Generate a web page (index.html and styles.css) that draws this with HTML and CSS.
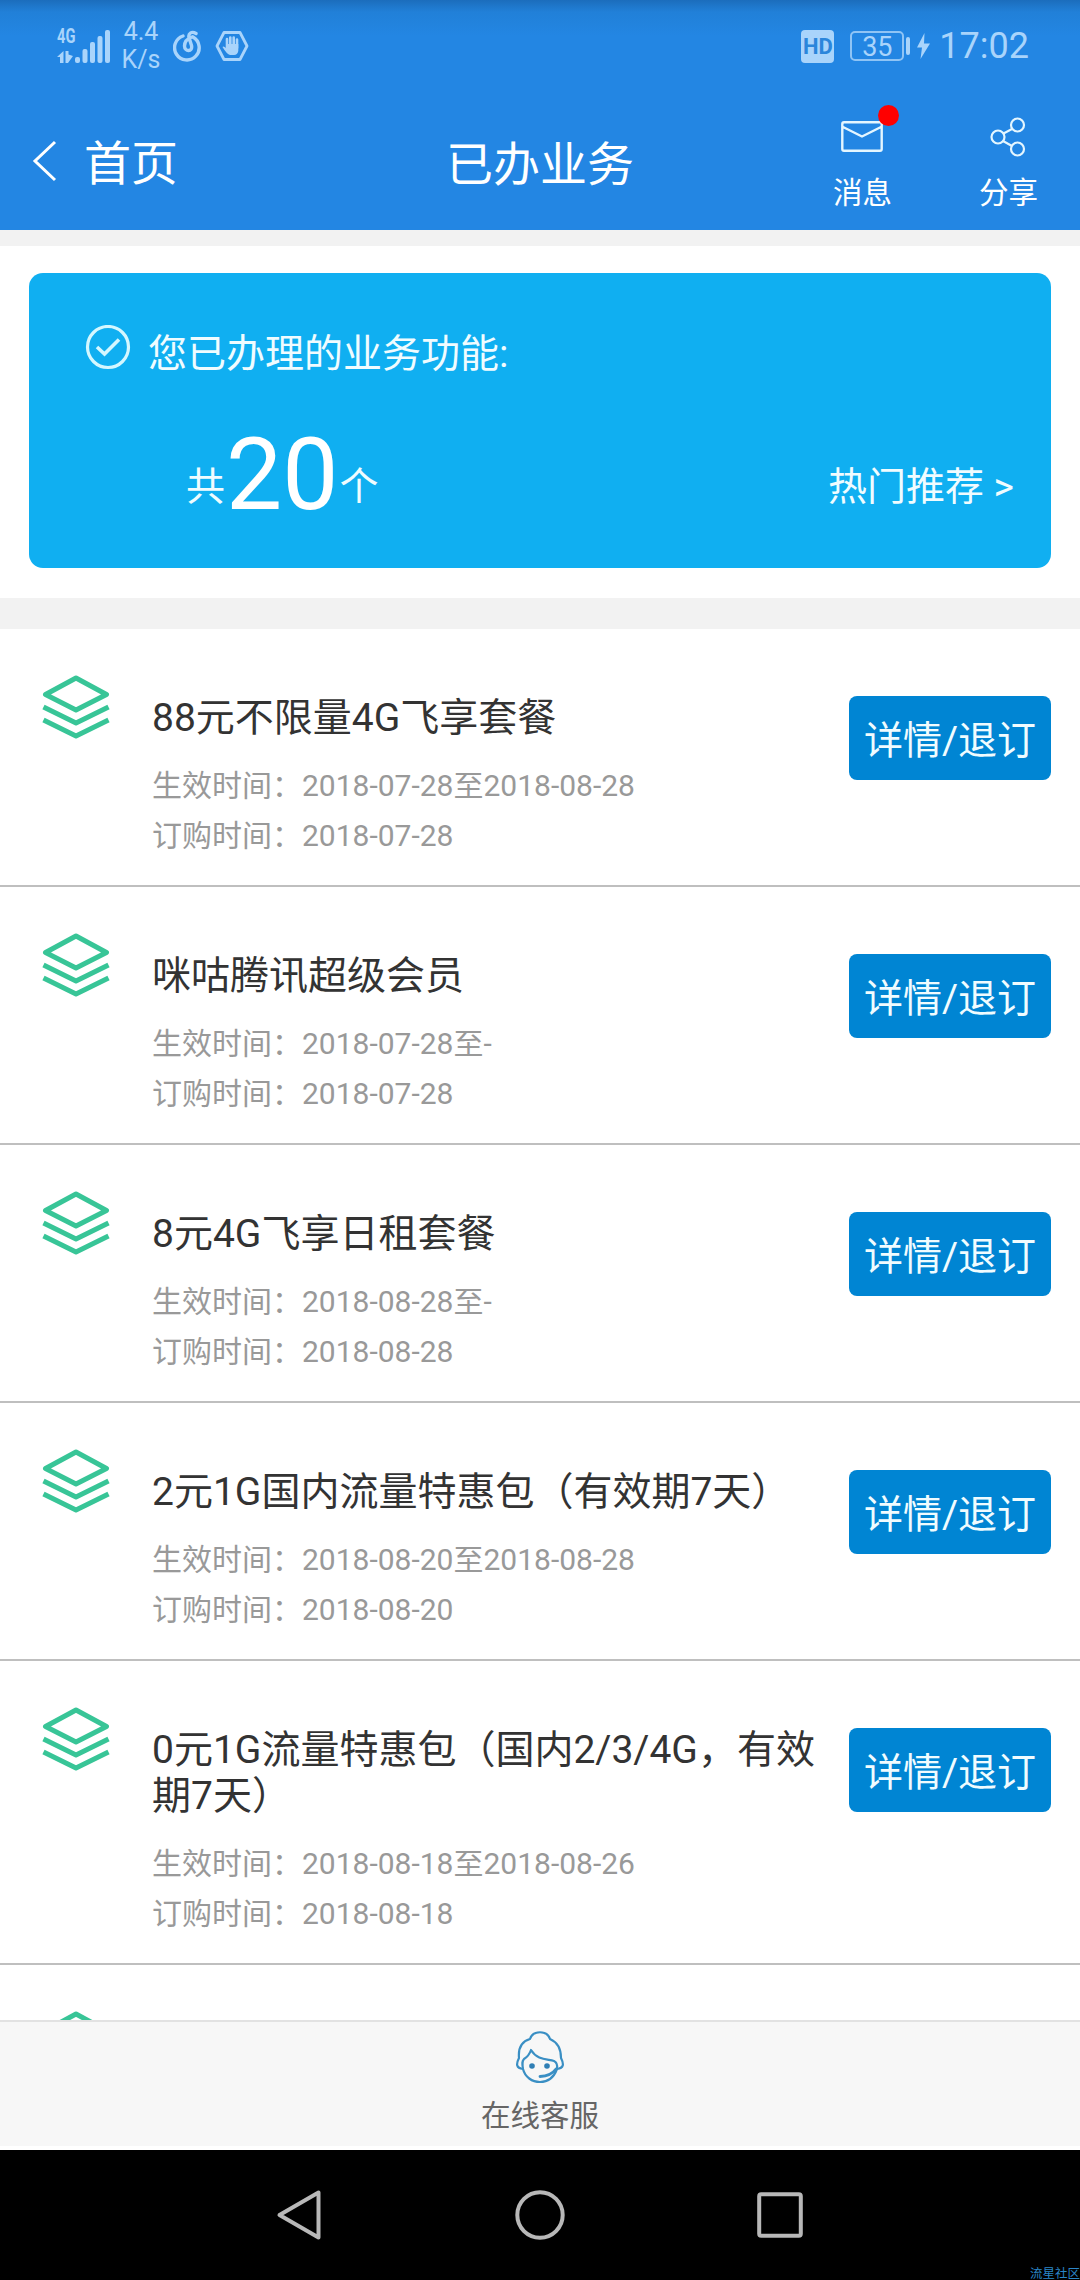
FILE: index.html
```html
<!DOCTYPE html>
<html lang="zh-CN">
<head>
    <meta charset="UTF-8">
    <meta name="viewport" content="width=device-width, initial-scale=1.0">
    <title>已办业务</title>
    <link rel="stylesheet" href="styles.css">
</head>
<body>
    <svg class="defs">
        <symbol id="layers" viewBox="0 0 68 64">
            <g fill="none" stroke="#38c597" stroke-width="5" stroke-linejoin="round">
                <path d="M34 3 L64.500 19.500 L34 35 L3.500 19.500 Z"/>
                <path d="M1.500 32 L34 48 L66.500 32"/>
                <path d="M1.500 45 L34 61 L66.500 45"/>
            </g>
        </symbol>
    </svg>

    <div class="page">
        <header class="header">
            <div class="status">
                <div class="network">
                    <span class="net-type">4G</span>
                    <svg class="signal" width="54" height="36" viewBox="0 0 54 36">
                        <g fill="#a9d4fb">
                            <path d="M6.500 23 V35 H3 V29 H0 Z M8.500 23 H11.500 V26.500 L16 28 L11 35 H8.500 Z"/>
                            <rect x="18" y="29" width="5" height="6" rx="2"/>
                            <rect x="25.500" y="21" width="5" height="14" rx="2"/>
                            <rect x="33" y="14" width="5" height="21" rx="2"/>
                            <rect x="40.500" y="8" width="5" height="27" rx="2"/>
                            <rect x="48" y="2" width="5" height="33" rx="2"/>
                        </g>
                    </svg>
                </div>
                <div class="speed"><span>4.4</span><span>K/s</span></div>
                <svg class="music" width="30" height="32" viewBox="0 0 30 32">
                    <g fill="none" stroke="#a9d4fb" stroke-width="3.400" stroke-linecap="round">
                        <path d="M10 6 A12.300 12.300 0 1 0 20 7"/>
                        <path d="M23 3.500 C19 1 15 3 16 7.500 L18.500 15.500 C20 22 11.500 22 11.500 16 C11.500 11.500 14.500 8.500 19 7"/>
                    </g>
                </svg>
                <svg class="block" width="34" height="30" viewBox="0 0 34 30">
                    <path d="M9 1.500 H25 L32 15 L25 28.500 H9 L2 15 Z" fill="none" stroke="#a9d4fb" stroke-width="2.800" stroke-linejoin="round"/>
                    <path d="M12 8 V17 M15.300 6.500 V17 M18.700 6.500 V17 M22 8.500 V17" stroke="#a9d4fb" stroke-width="2.600" stroke-linecap="round"/>
                    <path d="M11 13 H23.300 V20 Q22.500 24 19 24 H15 Q12 23.500 7.500 16 Q8.500 14.500 11 17 Z" fill="#a9d4fb"/>
                </svg>
                <span class="hd">HD</span>
                <span class="battery">35</span>
                <span class="battery-cap"></span>
                <svg class="bolt" width="13" height="26" viewBox="0 0 13 26">
                    <path d="M7.500 0 L0 14.500 H5 L3.500 26 L13 10.500 H7 Z" fill="#a9d4fb"/>
                </svg>
                <span class="clock">17:02</span>
            </div>
            <div class="nav">
                <div class="back">
                    <svg width="26" height="42" viewBox="0 0 26 42">
                        <path d="M24 2 L4 21 L24 40" fill="none" stroke="#fff" stroke-width="3"/>
                    </svg>
                    <span>首页</span>
                </div>
                <h1 class="title">已办业务</h1>
                <div class="actions">
                    <div class="action">
                        <div class="action-icon">
                            <svg width="42" height="31" viewBox="0 0 42 31">
                                <path d="M1.300 3 Q1.300 1.300 3 1.300 H39 Q40.700 1.300 40.700 3 V28 Q40.700 29.700 39 29.700 H3 Q1.300 29.700 1.300 28 Z M2 6 L21 15.500 L40 6" fill="none" stroke="#e4f6ff" stroke-width="2.400"/>
                            </svg>
                            <i class="dot"></i>
                        </div>
                        <span>消息</span>
                    </div>
                    <div class="action">
                        <div class="action-icon">
                            <svg width="36" height="40" viewBox="0 0 36 40">
                                <g fill="none" stroke="#e4f6ff" stroke-width="2.200">
                                    <circle cx="8" cy="20" r="6.500"/>
                                    <circle cx="27.500" cy="8" r="6.500"/>
                                    <circle cx="27.500" cy="32" r="6.500"/>
                                    <path d="M13.500 16.500 L22 12 M13 24 L22 29"/>
                                </g>
                            </svg>
                        </div>
                        <span>分享</span>
                    </div>
                </div>
            </div>
        </header>

        <section class="summary">
            <div class="card">
                <div class="card-head">
                    <svg width="46" height="46" viewBox="0 0 46 46">
                        <g fill="none" stroke="#d4f7ff" stroke-width="3.200">
                            <circle cx="23" cy="22" r="20.500"/>
                            <path d="M12 22 L19.500 29 L34 14.500" stroke-width="3.600"/>
                        </g>
                    </svg>
                    <span>您已办理的业务功能:</span>
                </div>
                <div class="card-foot">
                    <div class="total"><span>共</span><b>20</b><span>个</span></div>
                    <span class="hot">热门推荐 &gt;</span>
                </div>
            </div>
        </section>

        <main class="list">
            <div class="item">
                <svg class="icon"><use href="#layers"/></svg>
                <div class="info">
                    <h2>88元不限量4G飞享套餐</h2>
                    <p>生效时间：2018-07-28至2018-08-28</p>
                    <p>订购时间：2018-07-28</p>
                </div>
                <button type="button">详情/退订</button>
            </div>
            <div class="item">
                <svg class="icon"><use href="#layers"/></svg>
                <div class="info">
                    <h2>咪咕腾讯超级会员</h2>
                    <p>生效时间：2018-07-28至-</p>
                    <p>订购时间：2018-07-28</p>
                </div>
                <button type="button">详情/退订</button>
            </div>
            <div class="item">
                <svg class="icon"><use href="#layers"/></svg>
                <div class="info">
                    <h2>8元4G飞享日租套餐</h2>
                    <p>生效时间：2018-08-28至-</p>
                    <p>订购时间：2018-08-28</p>
                </div>
                <button type="button">详情/退订</button>
            </div>
            <div class="item">
                <svg class="icon"><use href="#layers"/></svg>
                <div class="info">
                    <h2>2元1G国内流量特惠包（有效期7天）</h2>
                    <p>生效时间：2018-08-20至2018-08-28</p>
                    <p>订购时间：2018-08-20</p>
                </div>
                <button type="button">详情/退订</button>
            </div>
            <div class="item">
                <svg class="icon"><use href="#layers"/></svg>
                <div class="info">
                    <h2>0元1G流量特惠包（国内2/3/4G，有效期7天）</h2>
                    <p>生效时间：2018-08-18至2018-08-26</p>
                    <p>订购时间：2018-08-18</p>
                </div>
                <button type="button">详情/退订</button>
            </div>
            <div class="item">
                <svg class="icon"><use href="#layers"/></svg>
            </div>
        </main>

        <footer class="service">
            <svg width="50" height="54" viewBox="0 0 50 54">
                <g fill="none" stroke="#3a8fc4" stroke-width="2.200" stroke-linejoin="round" stroke-linecap="round">
                    <path d="M8 39 C1 38 1 34 4 28 C3 17 8 11 15 9 C18 0 32 0 35 9 C42 12 46 17 46 28 C49 34 49 38 42 39"/>
                    <path d="M8 39 C7 33 7 31 9 29 Q14 26 16 20 C22 30 32 29 39 31 Q43 33 42 39 C39 47 33 52 25 52 C17 52 10 47 8 39 Z"/>
                    <path d="M41 39 Q36 46 25 46.500" stroke-width="2.800"/>
                </g>
                <circle cx="17" cy="36" r="2.800" fill="#2f7fb5"/>
                <circle cx="32" cy="36" r="2.800" fill="#2f7fb5"/>
            </svg>
            <span>在线客服</span>
        </footer>

        <div class="softkeys">
            <svg width="50" height="54" viewBox="0 0 50 54">
                <path d="M43.500 4.500 V49.500 L4.500 27 Z" fill="none" stroke="#b8b8b8" stroke-width="4" stroke-linejoin="round"/>
            </svg>
            <svg width="50" height="50" viewBox="0 0 50 50">
                <circle cx="25" cy="25" r="22.700" fill="none" stroke="#b8b8b8" stroke-width="4"/>
            </svg>
            <svg width="50" height="50" viewBox="0 0 50 50">
                <rect x="4.200" y="4.200" width="41.600" height="41.600" rx="2" fill="none" stroke="#b8b8b8" stroke-width="4"/>
            </svg>
            <span class="mark">流星社区</span>
        </div>
    </div>
</body>
</html>
```
FILE: styles.css
```css
* {
    box-sizing: border-box;
}
body {
    margin: 0;
    font-family: Roboto, "Noto Sans CJK SC", sans-serif;
    background: #fff;
}
h1, h2, p {
    margin: 0;
    font-weight: 400;
}
svg {
    display: block;
    flex: none;
}
.defs {
    display: none;
}
.page {
    width: 1080px;
    height: 2280px;
    display: flex;
    flex-direction: column;
    overflow: hidden;
}

/* header */
.header {
    height: 230px;
    flex: none;
    color: #fff;
    background: linear-gradient(#1b6dbc, #2180d8 12px, #2386e3 36px);
}
.status {
    height: 92px;
    padding: 0 51px 0 57px;
    display: flex;
    align-items: center;
    color: #a9d4fb;
}
.network {
    width: 54px;
    height: 36px;
    display: grid;
}
.network > * {
    grid-area: 1 / 1;
}
.net-type {
    font-size: 21px;
    line-height: 16px;
    font-weight: 700;
    transform: scaleX(0.7);
    transform-origin: left;
    align-self: start;
}
.speed {
    width: 36px;
    margin-left: 12px;
    display: flex;
    flex-direction: column;
    align-items: center;
    font-size: 25px;
    line-height: 28px;
}
.music {
    margin-left: 14px;
}
.block {
    margin-left: 12px;
}
.hd {
    width: 33px;
    height: 33px;
    margin-left: auto;
    border-radius: 4px;
    background: #a9d4fb;
    color: #2b86db;
    font-size: 22px;
    font-weight: 700;
    line-height: 33px;
    text-align: center;
}
.battery {
    width: 54px;
    height: 30px;
    margin-left: 16px;
    border: 2px solid #8fc4f5;
    border-radius: 5px;
    font-size: 27px;
    line-height: 28px;
    text-align: center;
}
.battery-cap {
    width: 4px;
    height: 18px;
    margin-left: 2px;
    border-radius: 2px;
    background: #a9d4fb;
}
.bolt {
    margin: 0 9px 0 7px;
}
.clock {
    font-size: 36px;
    line-height: 36px;
}
.nav {
    height: 138px;
    padding: 0 42px;
    display: grid;
    grid-template-columns: 1fr auto 1fr;
}
.back {
    height: 138px;
    margin-left: -11px;
    display: flex;
    align-items: center;
    gap: 27px;
    font-size: 47px;
}
.back span {
    line-height: 50px;
    margin-top: 5px;
}
.title {
    font-size: 47px;
    line-height: 145px;
}
.actions {
    display: flex;
    justify-content: flex-end;
    gap: 87px;
}
.action {
    display: flex;
    flex-direction: column;
    align-items: center;
    font-size: 29.500px;
    line-height: 40px;
}
.action-icon {
    height: 81px;
    padding-top: 8px;
    display: flex;
    align-items: center;
    position: relative;
}
.dot {
    position: absolute;
    top: 13px;
    right: -16px;
    width: 21px;
    height: 21px;
    border-radius: 50%;
    background: #f00;
}

/* summary card */
.summary {
    height: 399px;
    flex: none;
    padding: 27px 29px 0;
    border-top: 16px solid #f2f2f2;
    border-bottom: 31px solid #f2f2f2;
}
.card {
    height: 295px;
    padding: 52px 37px 0 56px;
    border-radius: 14px;
    background: #10aff1;
    color: #f0fcff;
    font-size: 39px;
}
.card-head {
    display: flex;
    gap: 17px;
}
.card-head span {
    line-height: 58px;
}
.card-foot {
    height: 120px;
    margin-top: 31px;
    padding-left: 101px;
    display: flex;
    justify-content: space-between;
    line-height: 56px;
}
.total {
    display: flex;
}
.total span,
.hot {
    padding-top: 45px;
}
.total b {
    margin: 0 1px;
    color: #fff;
    font-size: 100px;
    font-weight: 400;
    line-height: 121px;
}

/* list */
.list {
    flex: 1;
    min-height: 0;
    overflow: hidden;
}
.item {
    display: flex;
    align-items: flex-start;
    padding: 0 29px 24px 42px;
    border-bottom: 2px solid #bfbfbf;
}
.icon {
    width: 68px;
    height: 64px;
    margin-top: 46px;
}
.info {
    width: 670px;
    margin-left: 42px;
    padding-top: 66px;
}
.info h2 {
    font-size: 39px;
    line-height: 46px;
    color: #333;
    margin-bottom: 20px;
}
.info p {
    font-size: 30px;
    line-height: 50px;
    color: #999;
}
.item button {
    width: 202px;
    height: 84px;
    margin: 67px 0 0 auto;
    padding: 0 0 3px;
    border: none;
    border-radius: 8px;
    background: #0085d3;
    color: #f0fcff;
    font-family: inherit;
    font-size: 39px;
    white-space: nowrap;
}

/* bottom */
.service {
    height: 130px;
    flex: none;
    padding-top: 8px;
    border-top: 2px solid #e2e2e2;
    border-bottom: 4px solid #fff;
    background: #f7f7f7;
    display: flex;
    flex-direction: column;
    align-items: center;
    font-size: 29.500px;
    line-height: 40px;
    color: #666;
}
.service span {
    margin-top: 12px;
}
.softkeys {
    height: 130px;
    flex: none;
    display: flex;
    justify-content: center;
    align-items: center;
    gap: 190px;
    position: relative;
    background: #000;
}
.mark {
    position: absolute;
    right: 0;
    bottom: 0;
    font-size: 12.500px;
    line-height: 13px;
    color: #2b86c8;
}
```
